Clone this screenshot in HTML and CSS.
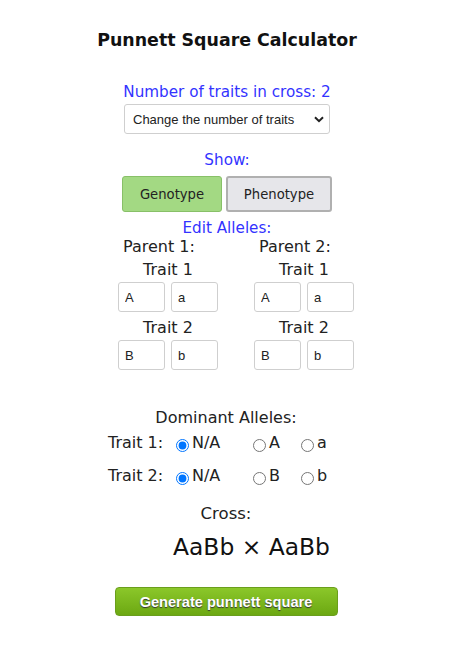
FILE: index.html
```html
<!DOCTYPE html>
<html>
<head>
<meta charset="utf-8">
<link rel="stylesheet" href="styles.css">
</head>
<body>
<div class="page">
  <h1 class="title">Punnett Square Calculator</h1>
  <div class="blue-label num-label">Number of traits in cross: 2</div>
  <select class="traits-select">
    <option>Change the number of traits</option>
  </select>
  <div class="blue-label show-label">Show:</div>
  <div class="toggle">
    <button class="tbtn tbtn-on">Genotype</button>
    <button class="tbtn tbtn-off">Phenotype</button>
  </div>
  <div class="blue-label edit-label">Edit Alleles:</div>
  <div class="parents">
    <div class="parent">
      <div class="parent-name">Parent 1:</div>
      <div class="trait-name">Trait 1</div>
      <div class="pair"><input class="allele" value="A"><input class="allele" value="a"></div>
      <div class="trait-name t2">Trait 2</div>
      <div class="pair"><input class="allele" value="B"><input class="allele" value="b"></div>
    </div>
    <div class="parent">
      <div class="parent-name">Parent 2:</div>
      <div class="trait-name">Trait 1</div>
      <div class="pair"><input class="allele" value="A"><input class="allele" value="a"></div>
      <div class="trait-name t2">Trait 2</div>
      <div class="pair"><input class="allele" value="B"><input class="allele" value="b"></div>
    </div>
  </div>
  <div class="dom-label">Dominant Alleles:</div>
  <div class="dom-grid">
    <span class="dom-trait">Trait 1:</span>
    <label class="opt"><input type="radio" name="t1" checked>N/A</label>
    <label class="opt"><input type="radio" name="t1">A</label>
    <label class="opt"><input type="radio" name="t1">a</label>
    <span class="dom-trait">Trait 2:</span>
    <label class="opt"><input type="radio" name="t2" checked>N/A</label>
    <label class="opt"><input type="radio" name="t2">B</label>
    <label class="opt"><input type="radio" name="t2">b</label>
  </div>
  <div class="cross-label">Cross:</div>
  <div class="cross">AaBb × AaBb</div>
  <button class="generate">Generate punnett square</button>
</div>
</body>
</html>
```
FILE: styles.css
```css
html, body {
  margin: 0;
  padding: 0;
  background: #fff;
}
.page {
  width: 450px;
  display: flex;
  flex-direction: column;
  align-items: center;
  font-family: "DejaVu Sans", Verdana, sans-serif;
  color: #222;
}
.title {
  margin: 30px 0 0 4px;
  font-size: 17.4px;
  line-height: 20px;
  font-weight: bold;
  color: #111;
}
.blue-label {
  color: #3333ff;
  font-size: 15.2px;
  line-height: 18px;
}
.num-label { margin-top: 33px; margin-left: 4px; }
.traits-select {
  margin-top: 3px;
  margin-left: 4px;
  width: 206px;
  height: 30px;
  border: 1px solid #cfcfcf;
  border-radius: 3px;
  background: #fff url("data:image/svg+xml;utf8,<svg xmlns='http://www.w3.org/2000/svg' width='10' height='7' viewBox='0 0 10 7'><path d='M1 1.2 L5 5.2 L9 1.2' fill='none' stroke='%23222' stroke-width='2'/></svg>") no-repeat right 5px center;
  -webkit-appearance: none;
  appearance: none;
  font-family: "Liberation Sans", Arial, sans-serif;
  font-size: 13px;
  color: #222;
  padding: 0 0 0 8px;
}
.show-label { margin-top: 17px; margin-left: 4px; }
.toggle {
  margin-top: 7px;
  margin-left: 4px;
  display: flex;
  gap: 4px;
}
.tbtn {
  height: 36px;
  font-family: "DejaVu Sans", Verdana, sans-serif;
  font-size: 13.2px;
  color: #222;
  border-radius: 3px;
  padding: 0;
}
.tbtn-on {
  width: 100px;
  background: #a3d983;
  border: 1px solid #88c068;
}
.tbtn-off {
  width: 106px;
  background: #e6e6ea;
  border: 2px solid #b0b0b0;
}
.edit-label { margin-top: 7px; margin-left: 4px; }
.parents {
  margin-top: 1px;
  display: flex;
  gap: 36px;
  margin-left: 22px;
}
.parent {
  display: flex;
  flex-direction: column;
  align-items: center;
  font-size: 16px;
  line-height: 18px;
}
.parent-name {
  align-self: flex-start;
  margin-left: 5px;
}
.trait-name { margin-top: 5px; }
.trait-name.t2 { margin-top: 7px; }
.pair {
  margin-top: 3px;
  display: flex;
  gap: 6px;
}
.allele {
  width: 47px;
  height: 30px;
  box-sizing: border-box;
  border: 1px solid #cfcfcf;
  border-radius: 3px;
  padding: 0 0 0 6px;
  font-family: "Liberation Sans", Arial, sans-serif;
  font-size: 13px;
  color: #222;
}
.dom-label {
  margin-top: 39px;
  margin-left: 2px;
  font-size: 16px;
  line-height: 18px;
}
.dom-grid {
  align-self: flex-start;
  margin: 7px 0 0 108px;
  display: grid;
  grid-template-columns: 68px 77px 48px 31px;
  row-gap: 15px;
  font-size: 16px;
  line-height: 18px;
}
.opt {
  display: flex;
  align-items: center;
}
.opt input {
  width: 13px;
  height: 13px;
  margin: 4px 3px 0 0;
}
.cross-label {
  margin-top: 20px;
  margin-left: 2px;
  font-size: 16.5px;
  line-height: 18px;
}
.cross {
  margin-top: 9px;
  margin-left: 53px;
  font-size: 23.4px;
  line-height: 30px;
  color: #111;
}
.generate {
  margin-top: 25px;
  width: 223px;
  height: 29px;
  border: 1px solid #6a9e1c;
  border-radius: 4px;
  background: linear-gradient(#8bc72a, #6ca812);
  color: #fff;
  font-family: "Liberation Sans", Arial, sans-serif;
  font-weight: bold;
  font-size: 14.6px;
  text-shadow: 0 1px 1px #333;
  margin-left: 2px;
}
```
